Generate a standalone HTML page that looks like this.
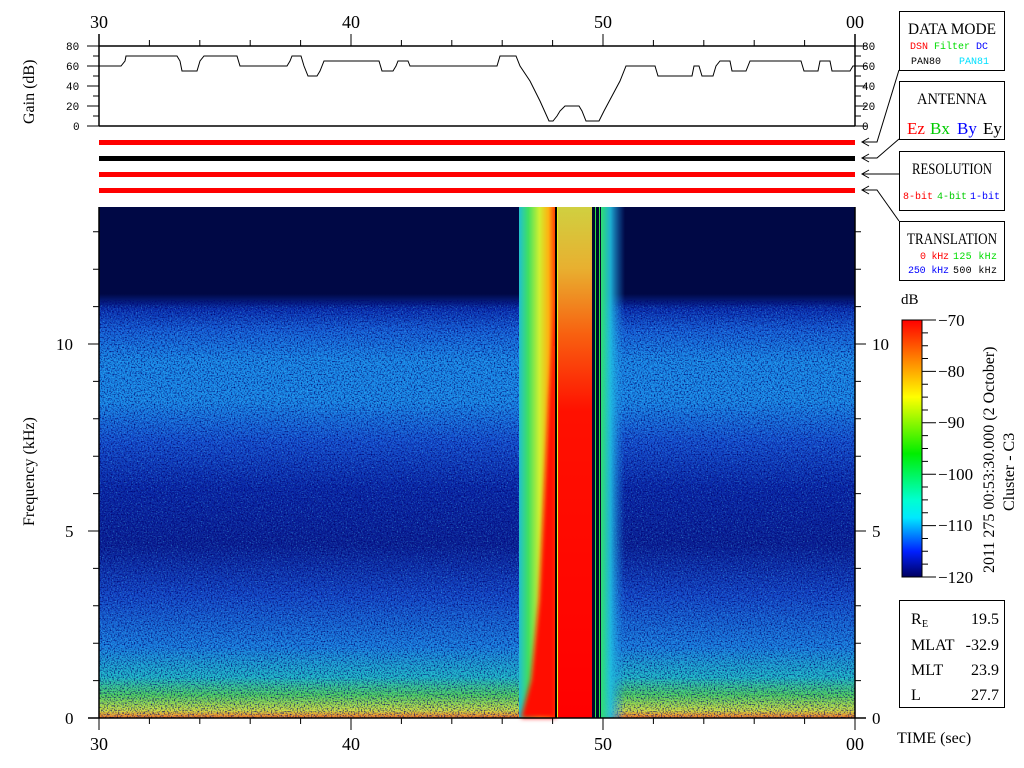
<!DOCTYPE html>
<html><head><meta charset="utf-8"><style>
html,body{margin:0;padding:0;background:#fff;width:1024px;height:768px;overflow:hidden}
svg{display:block}
.t{font-family:"Liberation Serif",serif;fill:#000}
.m{font-family:"Liberation Mono",monospace;font-size:10px}
</style></head><body>
<svg width="1024" height="768" viewBox="0 0 1024 768" xmlns="http://www.w3.org/2000/svg">
<defs>
<linearGradient id="bg" x1="0" y1="207" x2="0" y2="718" gradientUnits="userSpaceOnUse">
<stop offset="0" stop-color="#000845"/>
<stop offset="0.17" stop-color="#000845"/>
<stop offset="0.2" stop-color="#0a30b0"/>
<stop offset="0.24" stop-color="#1660d8"/>
<stop offset="0.3" stop-color="#1a8ae8"/>
<stop offset="0.38" stop-color="#1a8ae8"/>
<stop offset="0.46" stop-color="#1550d0"/>
<stop offset="0.55" stop-color="#0a28a8"/>
<stop offset="0.66" stop-color="#0a2095"/>
<stop offset="0.76" stop-color="#1448c8"/>
<stop offset="0.86" stop-color="#1a80e0"/>
<stop offset="0.92" stop-color="#20b8c8"/>
<stop offset="0.955" stop-color="#50d060"/>
<stop offset="0.985" stop-color="#d0e040"/>
<stop offset="1" stop-color="#ff7020"/>
</linearGradient>
<linearGradient id="burst" x1="519" y1="0" x2="556" y2="0" gradientUnits="userSpaceOnUse">
<stop offset="0" stop-color="#20c0d0"/>
<stop offset="0.25" stop-color="#40e060"/>
<stop offset="0.55" stop-color="#d0f030"/>
<stop offset="0.8" stop-color="#ffb010"/>
<stop offset="1" stop-color="#ff3000"/>
</linearGradient>
<linearGradient id="redtop" x1="0" y1="207" x2="0" y2="718" gradientUnits="userSpaceOnUse">
<stop offset="0" stop-color="#d0d040"/>
<stop offset="0.12" stop-color="#e8b030"/>
<stop offset="0.25" stop-color="#f86010"/>
<stop offset="0.4" stop-color="#ff1000"/>
<stop offset="1" stop-color="#ff0000"/>
</linearGradient>
<linearGradient id="post" x1="601" y1="0" x2="625" y2="0" gradientUnits="userSpaceOnUse">
<stop offset="0" stop-color="#30e070" stop-opacity="1"/>
<stop offset="0.4" stop-color="#20c0e0" stop-opacity="0.9"/>
<stop offset="1" stop-color="#1a80e0" stop-opacity="0"/>
</linearGradient>
<linearGradient id="cb" x1="0" y1="320" x2="0" y2="577" gradientUnits="userSpaceOnUse">
<stop offset="0" stop-color="#ff0000"/>
<stop offset="0.15" stop-color="#ff8000"/>
<stop offset="0.3" stop-color="#ffff00"/>
<stop offset="0.52" stop-color="#00ee00"/>
<stop offset="0.7" stop-color="#00ffd0"/>
<stop offset="0.77" stop-color="#00e8ff"/>
<stop offset="0.9" stop-color="#0020ff"/>
<stop offset="1" stop-color="#000060"/>
</linearGradient>
<filter id="nz" x="0" y="0" width="1" height="1">
<feTurbulence type="fractalNoise" baseFrequency="0.7" numOctaves="1" seed="3"/>
<feColorMatrix type="matrix" values="0 0 0 0 0  0 0 0 0 0  0 0 0 0 0.15  0 0 0 3 -1.4"/>
</filter>
<filter id="nz2" x="0" y="0" width="1" height="1">
<feTurbulence type="fractalNoise" baseFrequency="0.8" numOctaves="1" seed="9"/>
<feColorMatrix type="matrix" values="0 0 0 0 0.1  0 0 0 0 0.85  0 0 0 0 1  0 0 0 3 -1.6"/>
</filter>
<filter id="bl"><feGaussianBlur stdDeviation="2.5"/></filter>
</defs>

<rect x="99" y="207" width="756" height="511" fill="url(#bg)"/>
<rect x="99" y="305" width="756" height="413" filter="url(#nz2)" opacity="0.5"/>
<rect x="99" y="300" width="756" height="418" filter="url(#nz)" opacity="0.9"/>
<rect x="519" y="207" width="37" height="511" fill="url(#burst)"/>
<polygon points="556,300 549,400 544,500 539,600 531,680 521,718 556,718" fill="#ff1000" filter="url(#bl)"/>
<rect x="556" y="207" width="37" height="511" fill="url(#redtop)"/>
<rect x="555" y="207" width="2" height="511" fill="#000"/>
<rect x="557" y="207" width="1" height="511" fill="#e0f020"/>
<rect x="592" y="207" width="10" height="511" fill="#000830"/>
<rect x="595" y="207" width="1" height="511" fill="#30e040"/>
<rect x="599" y="207" width="1" height="511" fill="#30e040"/>
<rect x="601" y="207" width="24" height="511" fill="url(#post)"/>

<g stroke="#000" stroke-width="1.5" fill="none">
<line x1="99" y1="46" x2="855" y2="46"/>
<line x1="99" y1="126" x2="855" y2="126"/>
<line x1="99" y1="34" x2="99" y2="126"/>
<line x1="855" y1="34" x2="855" y2="126"/>
</g>
<g stroke="#000" stroke-width="1">
<path d="M87 46H99M93 56H99M87 66H99M93 76H99M87 86H99M93 96H99M87 106H99M93 116H99M87 126H99"/>
<path d="M855 46H867M855 56H861M855 66H867M855 76H861M855 86H867M855 96H861M855 106H867M855 116H861M855 126H867"/>
<path d="M149.4 40V46M199.8 40V46M250.2 40V46M300.6 40V46M351 34V46M401.4 40V46M451.8 40V46M502.2 40V46M552.6 40V46M603 34V46M653.4 40V46M703.8 40V46M754.2 40V46M804.6 40V46"/>
</g>
<polyline fill="none" stroke="#000" stroke-width="1" points="99,66 121,66 125,61 126,56 177,56 180,61 182,71 197,71 200,61 204,56 237,56 240,66 287,66 290,61 292,56 301,56 304,66 308,76 317,76 320,71 324,61 379,61 382,71 393,71 396,66 398,61 408,61 410,66 497,66 500,56 516,56 520,66 530,81 540,101 549,121 553,121 557,116 560,111 565,106 579,106 582,111 586,121 599,121 604,111 612,96 620,81 626,66 655,66 658,76 692,76 694,66 699,66 702,76 713,76 716,66 720,61 730,61 732,71 746,71 750,61 801,61 804,71 818,71 820,61 830,61 832,71 850,71 853,66 855,66"/>
<g class="m">
<text x="66" y="50" font-size="11">80</text><text x="66" y="70" font-size="11">60</text><text x="66" y="90" font-size="11">40</text><text x="66" y="110" font-size="11">20</text><text x="73" y="130" font-size="11">0</text>
<text x="862" y="50" font-size="11">80</text><text x="862" y="70" font-size="11">60</text><text x="862" y="90" font-size="11">40</text><text x="862" y="110" font-size="11">20</text><text x="862" y="130" font-size="11">0</text>
</g>
<text class="t" font-size="16" transform="translate(34,124) rotate(-90)">Gain (dB)</text>

<rect x="99" y="140" width="756" height="5" fill="#ff0000"/>
<rect x="99" y="156" width="756" height="5" fill="#000"/>
<rect x="99" y="172" width="756" height="5" fill="#ff0000"/>
<rect x="99" y="188" width="756" height="5" fill="#ff0000"/>

<g class="t" font-size="18" text-anchor="middle">
<text x="99" y="28">30</text><text x="351" y="28">40</text><text x="603" y="28">50</text><text x="855" y="28">00</text>
<text x="99" y="750">30</text><text x="351" y="750">40</text><text x="603" y="750">50</text><text x="855" y="750">00</text>
</g>

<g stroke="#000" stroke-width="1.5" fill="none">
<line x1="99" y1="207" x2="99" y2="718"/>
<line x1="855" y1="207" x2="855" y2="718"/>
<line x1="88" y1="718" x2="866" y2="718"/>
</g>
<g stroke="#000" stroke-width="1">
<path d="M88 718H99M93 680.6H99M93 643.2H99M93 605.8H99M93 568.4H99M88 531H99M93 493.6H99M93 456.2H99M93 418.8H99M93 381.4H99M88 344H99M93 306.6H99M93 269.2H99M93 231.8H99"/>
<path d="M855 718H866M855 680.6H861M855 643.2H861M855 605.8H861M855 568.4H861M855 531H866M855 493.6H861M855 456.2H861M855 418.8H861M855 381.4H861M855 344H866M855 306.6H861M855 269.2H861M855 231.8H861"/>
<path d="M99 718V730M149.4 718V724M199.8 718V724M250.2 718V724M300.6 718V724M351 718V730M401.4 718V724M451.8 718V724M502.2 718V724M552.6 718V724M603 718V730M653.4 718V724M703.8 718V724M754.2 718V724M804.6 718V724M855 718V730"/>
</g>
<g class="t" font-size="17">
<text x="65" y="724">0</text><text x="65" y="537">5</text><text x="56" y="350">10</text>
<text x="872" y="724">0</text><text x="872" y="537">5</text><text x="872" y="350">10</text>
</g>
<text class="t" font-size="16" transform="translate(34,526) rotate(-90)">Frequency (kHz)</text>
<text class="t" font-size="16" x="897" y="743">TIME (sec)</text>

<text class="t" font-size="15" x="901" y="304">dB</text>
<rect x="902" y="320" width="20" height="257" fill="url(#cb)" stroke="#000" stroke-width="1"/>
<g stroke="#000" stroke-width="1">
<path d="M922 320H936M922 332.85H928M922 345.7H928M922 358.55H928M922 371.4H936M922 384.25H928M922 397.1H928M922 409.95H928M922 422.8H936M922 435.65H928M922 448.5H928M922 461.35H928M922 474.2H936M922 487.05H928M922 499.9H928M922 512.75H928M922 525.6H936M922 538.45H928M922 551.3H928M922 564.15H928M922 577H936"/>
</g>
<g class="t" font-size="17">
<text x="938" y="326">−70</text><text x="938" y="377">−80</text><text x="938" y="428">−90</text><text x="938" y="480">−100</text><text x="938" y="531">−110</text><text x="938" y="583">−120</text>
</g>
<text class="t" font-size="16" transform="translate(994,573) rotate(-90)">2011 275 00:53:30.000 (2 October)</text>
<text class="t" font-size="16" transform="translate(1014,511) rotate(-90)">Cluster - C3</text>

<g fill="#fff" stroke="#000" stroke-width="1">
<rect x="899.5" y="11.5" width="105" height="59"/>
<rect x="899.5" y="81.5" width="105" height="58"/>
<rect x="899.5" y="151.5" width="105" height="59"/>
<rect x="899.5" y="221.5" width="105" height="59"/>
<rect x="899.5" y="600.5" width="105" height="107"/>
</g>
<g stroke="#000" stroke-width="1" fill="none">
<path d="M899 70L877 142H862M869 138L862 142L869 146"/>
<path d="M899 139L877 158H862M869 154L862 158L869 162"/>
<path d="M899 174H862M869 170L862 174L869 178"/>
<path d="M899 221L877 190H862M869 186L862 190L869 194"/>
</g>
<g class="t" font-size="16" text-anchor="middle">
<text x="952" y="34" textLength="88" lengthAdjust="spacingAndGlyphs">DATA MODE</text>
<text x="952" y="104" textLength="70" lengthAdjust="spacingAndGlyphs">ANTENNA</text>
<text x="952" y="174" textLength="80" lengthAdjust="spacingAndGlyphs">RESOLUTION</text>
<text x="952" y="244" textLength="90" lengthAdjust="spacingAndGlyphs">TRANSLATION</text>
</g>
<g class="m">
<text x="910" y="49" fill="#ff0000">DSN</text><text x="934" y="49" fill="#00dd00">Filter</text><text x="976" y="49" fill="#0000ff">DC</text>
<text x="911" y="64" fill="#000">PAN80</text><text x="959" y="64" fill="#00e0ff">PAN81</text>
<text x="903" y="199" fill="#ff0000" textLength="30">8-bit</text><text x="937" y="199" fill="#00cc00" textLength="30">4-bit</text><text x="970" y="199" fill="#0000ff" textLength="30">1-bit</text>
<text x="920" y="259" fill="#ff0000" textLength="29">0 kHz</text><text x="953" y="259" fill="#00dd00" textLength="44">125 kHz</text>
<text x="908" y="273" fill="#0000ff" textLength="41">250 kHz</text><text x="953" y="273" fill="#000" textLength="44">500 kHz</text>
</g>
<g class="t" font-size="17">
<text x="907" y="134" fill="#ff0000">Ez</text><text x="930" y="134" fill="#00cc00">Bx</text><text x="957" y="134" fill="#0000ff">By</text><text x="983" y="134" fill="#000">Ey</text>
</g>
<g class="t" font-size="16">
<text x="911" y="624">R</text><text x="922" y="627" font-size="10">E</text><text x="999" y="624" text-anchor="end">19.5</text>
<text x="911" y="650">MLAT</text><text x="999" y="650" text-anchor="end">-32.9</text>
<text x="911" y="675">MLT</text><text x="999" y="675" text-anchor="end">23.9</text>
<text x="911" y="700">L</text><text x="999" y="700" text-anchor="end">27.7</text>
</g>
</svg>
</body></html>
